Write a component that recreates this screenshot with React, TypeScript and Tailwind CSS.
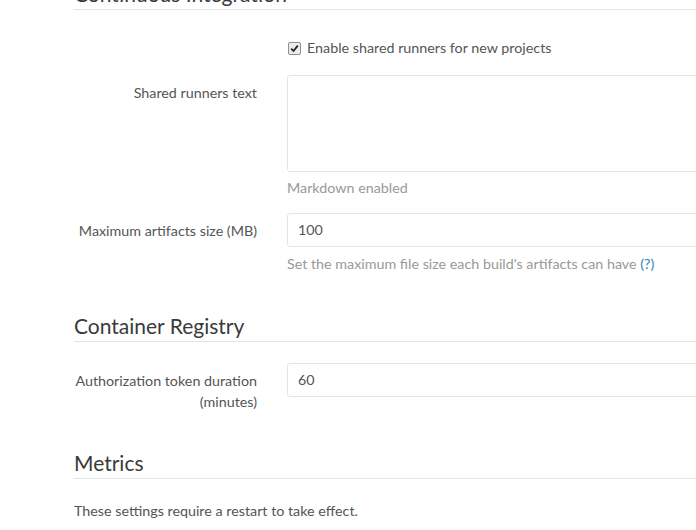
import React from 'react'

function SectionTitle({ title, className = '' }: { title: string; className?: string }) {
  return (
    <h4 className={`text-[21px] leading-6 pb-[3px] border-b border-[#e5e5e5] text-[#3a3a3a] ${className}`}>
      {title}
    </h4>
  )
}

function Row({ label, children, className = '' }: { label: React.ReactNode; children: React.ReactNode; className?: string }) {
  return (
    <div className={`flex gap-[30px] ${className}`}>
      <label className="w-[183px] shrink-0 text-right pt-[7px] leading-[21px] text-[#555]">{label}</label>
      <div className="flex-1 min-w-0">{children}</div>
    </div>
  )
}

function CheckBox() {
  return (
    <span className="w-[13px] h-[13px] ml-px mr-[6px] border border-[#8f8f8f] rounded-[2px] bg-[#ececec] flex items-center justify-center">
      <svg width="9" height="9" viewBox="0 0 9 9">
        <path d="M1.2 4.6 L3.5 7 L7.8 1.6" fill="none" stroke="#222" strokeWidth="1.8" />
      </svg>
    </span>
  )
}

export default function App() {
  return (
    <div
      className="w-[696px] h-[530px] overflow-hidden bg-white text-[14.3px] text-[#555] pl-[74px]"
      style={{ fontFamily: 'Lato, "Open Sans", sans-serif' }}
    >
      <div className="w-[700px]">
        <SectionTitle title="Continuous Integration" className="-mt-[18px]" />

        {/* Shared runners */}
        <div className="flex gap-[30px] mt-[28px]">
          <div className="w-[183px] shrink-0" />
          <label className="flex items-center leading-5 text-[#555]">
            <CheckBox />
            Enable shared runners for new projects
          </label>
        </div>

        <Row label="Shared runners text" className="mt-[17px]">
          <textarea className="block w-full h-[97px] border border-[#e5e5e5] rounded-[3px] resize-none" />
          <p className="mt-[6px] leading-5 text-[#999]">Markdown enabled</p>
        </Row>

        <Row label="Maximum artifacts size (MB)" className="mt-[15px]">
          <div className="h-[34px] border border-[#e5e5e5] rounded-[3px] px-[10px] flex items-center text-[#555]">100</div>
          <p className="mt-[7px] leading-5 text-[#999]">
            Set the maximum file size each build's artifacts can have <span className="text-[#3084bb]">(?)</span>
          </p>
        </Row>

        <SectionTitle title="Container Registry" className="mt-[40px]" />

        <Row
          label={
            <>
              Authorization token duration
              <br />
              (minutes)
            </>
          }
          className="mt-[21px]"
        >
          <div className="h-[34px] border border-[#e5e5e5] rounded-[3px] px-[10px] flex items-center text-[#555]">60</div>
        </Row>

        <SectionTitle title="Metrics" className="mt-[39px]" />

        <p className="mt-[22px] leading-5 text-[#555]">These settings require a restart to take effect.</p>
      </div>
    </div>
  )
}
